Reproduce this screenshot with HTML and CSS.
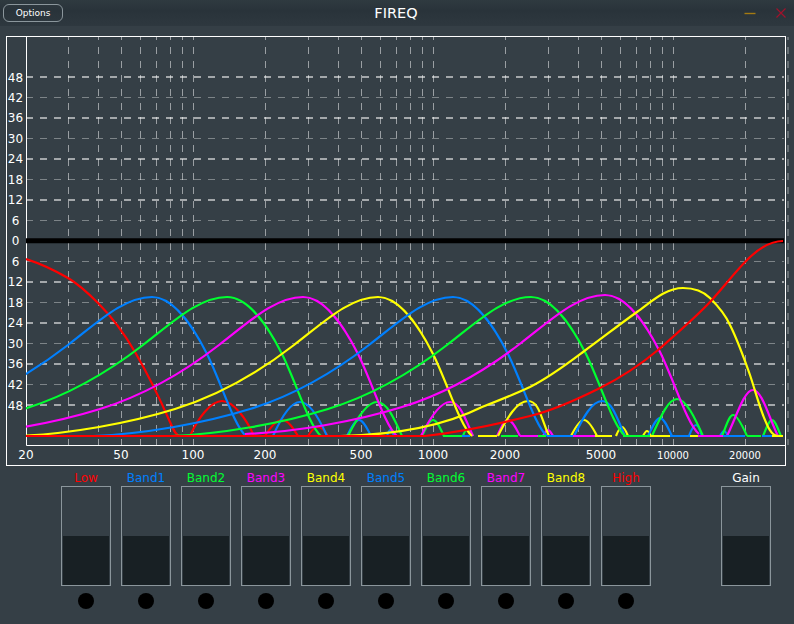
FILE: index.html
```html
<!DOCTYPE html>
<html lang="en">
  <head>
    <meta charset="UTF-8" />
    <title>FIREQ</title>
    <link rel="stylesheet" href="styles.css">
  </head>
  <body>
    <div class="titlebar">
      <button class="options-btn">Options</button>
      <div class="app-title">FIREQ</div>
      <div class="win-btns">
        <svg class="win-icon" width="12" height="12" viewBox="0 0 12 12"><path d="M0.5 6.5H11.5" stroke="#a47a12" stroke-width="1.4" /></svg>
        <svg class="win-icon" width="12" height="12" viewBox="0 0 12 12"><path d="M1.5 1.5L10.5 10.5M10.5 1.5L1.5 10.5" stroke="#a0122c" stroke-width="1.2" /></svg>
      </div>
    </div>

    <div class="graph">
      <svg class="graph-svg" width="778" height="428" viewBox="7 37 778 428">
        <defs>
          <clipPath id="plot"><rect x="26" y="37" width="758" height="408" /></clipPath>
          <g id="decade">
            <path d="M68.5 37V445M98.5 37V445M121.5 37V445M140.5 37V445M156.5 37V445M170.5 37V445M182.5 37V445M193.5 37V445M265.5 37V445" />
          </g>
          <!-- band shape, peak sits at x=0 -->
          <path id="hump" d="M-360 436 C-310 434 -250 423.6 -203 409 C-163 396.6 -124 376 -84 345 C-54 322 -28 297 0 297 C21 297 41 326 55 354 C69 382 82 426 94 436" />
        </defs>

        <!-- grid -->
        <g class="grid-v">
          <use href="#decade" />
          <use href="#decade" x="240" />
          <use href="#decade" x="480" />
          <path d="M788 37V445" />
        </g>
        <path class="grid-thin" d="M26 97.5H784M26 138.5H784M26 179.5H784M26 220.5H784M26 261.5H784M26 302.5H784M26 343.5H784M26 384.5H784" />
        <path class="grid-thick" d="M26 77H784M26 118H784M26 159H784M26 200H784M26 282H784M26 323H784M26 364H784M26 405H784" />

        <!-- axes -->
        <path class="axis" d="M26.5 37V445.5H785" />
        <path class="zero-line" d="M26 240.8H784" />

        <g class="y-labels">
          <text x="15.5" y="82">48</text>
          <text x="15.5" y="102">42</text>
          <text x="15.5" y="122">36</text>
          <text x="15.5" y="143">30</text>
          <text x="15.5" y="163">24</text>
          <text x="15.5" y="184">18</text>
          <text x="15.5" y="204">12</text>
          <text x="15.5" y="225">6</text>
          <text x="15.5" y="245">0</text>
          <text x="15.5" y="266">6</text>
          <text x="15.5" y="286">12</text>
          <text x="15.5" y="307">18</text>
          <text x="15.5" y="327">24</text>
          <text x="15.5" y="348">30</text>
          <text x="15.5" y="368">36</text>
          <text x="15.5" y="389">42</text>
          <text x="15.5" y="410">48</text>
        </g>
        <g class="x-labels">
          <text x="26" y="459">20</text>
          <text x="121" y="459">50</text>
          <text x="193" y="459">100</text>
          <text x="265" y="459">200</text>
          <text x="361" y="459">500</text>
          <text x="433" y="459">1000</text>
          <text x="505" y="459">2000</text>
          <text x="601" y="459">5000</text>
          <text x="673" y="459" class="small">10000</text>
          <text x="745" y="459" class="small">20000</text>
        </g>

        <!-- filter curves, drawn low to high -->
        <g class="curves" clip-path="url(#plot)">
          <path class="red" d="M26 259 C42 264 56 271 68 278 C80 285 90 295 98 303 C110 315 124 333 135 352 C146 371 160 399 170 422 C173 429 176 436 180 436 M190 436 C198 418 211 401 222 401 S246 418 254 436 M265 436 C270 428 276 420 282 420 S293 428 298 436 M308 436 C311 431 315 427 318 427 S325 431 328 436" />

          <use class="blue" href="#hump" x="152" />
          <path class="blue" d="M273 436 C281 418 290 402 300 402 S319 418 327 436 M347 436 C351 428 355 420 359 420 S367 428 371 436 M387 436 C388 433 389 430 390 430 S393 433 394 436" />

          <use class="green" href="#hump" x="227" />
          <path class="green" d="M348 436 C357 418 367 402 377 402 S394 418 402 436 M422 436 C426 428 429 420 433 420 S440 428 444 436 M463 436 C464 433 465 430 467 430 S471 433 473 436" />

          <use class="magenta" href="#hump" x="303" />
          <path class="magenta" d="M421 436 C430 418 440 402 450 402 S465 418 473 436 M497 436 C501 428 504 420 508 420 S516 428 520 436 M543 436 C545 433 546 430 548 430 S551 433 553 436" />

          <use class="yellow" href="#hump" x="378" />
          <path class="yellow" d="M498 436 C507 418 517 401 528 401 S541 418 549 436 M571 436 C575 428 580 420 584 420 S593 428 597 436 M616 436 C618 431 620 427 622 427 S626 431 628 436 M643 436 C644 434 646 431 647 431 S650 434 651 436" />

          <use class="blue" href="#hump" x="453" />
          <path class="blue" d="M574 436 C583 418 592 401 602 401 S617 418 625 436 M648 436 C652 428 656 418 660 418 S668 428 672 436 M689 436 C691 431 693 425 696 425 S700 431 702 436 M720 436 C721 434 723 431 724 431 S727 434 728 436" />

          <use class="green" href="#hump" x="531" />
          <path class="green" d="M652 436 C660 418 668 399 677 399 S695 418 703 436 M722 436 C726 427 729 415 733 415 S743 427 747 436 M763 436 C766 429 769 420 772 420 S778 429 781 436" />

          <use class="magenta" href="#hump" x="605" y="-2" />
          <path class="magenta" d="M727 436 C736 418 744 390 753 390 S769 418 778 436" />

          <path class="yellow" d="M340 436 C390 435 440 428 482 407 C500 400 515 394 530 387 C550 377 567 364 583 352 C601 339 620 324 637 312 C650 303 665 288 683 288 C695 288 703 291 710 298 C720 308 726 316 730 325 C738 341 744 358 750 375 C755 390 758 402 763 415 C767 425 771 436 778 436" />

          <!-- flat floor where each band reads as zero -->
          <path class="green" d="M443 436H463M480 436H484M501 436H518M538 436H546M623 436H650M747 436H761" />
          <path class="blue" d="M462 436H470M547 436H573M670 436H690M723 436H745M762 436H772" />
          <path class="magenta" d="M520 436H538M573 436H596M698 436H723" />
          <path class="yellow" d="M478 436H497M595 436H612M650 436H670M690 436H698M772 436H783" />

          <path class="red" d="M26 436 H425 C460 432 495 424.7 530 416 C555 410 578 399 600 388 C618 379 640 365 658 350 C675 335 695 318 710 302 C722 289 735 272 747 260 C757 250 770 241 783 241" />
        </g>
      </svg>
    </div>

    <div class="strip">
      <div class="slot">
        <div class="slot-name red-txt">Low</div>
        <div class="fader"><div class="fader-fill"></div></div>
        <div class="knob"></div>
      </div>
      <div class="slot">
        <div class="slot-name blue-txt">Band1</div>
        <div class="fader"><div class="fader-fill"></div></div>
        <div class="knob"></div>
      </div>
      <div class="slot">
        <div class="slot-name green-txt">Band2</div>
        <div class="fader"><div class="fader-fill"></div></div>
        <div class="knob"></div>
      </div>
      <div class="slot">
        <div class="slot-name magenta-txt">Band3</div>
        <div class="fader"><div class="fader-fill"></div></div>
        <div class="knob"></div>
      </div>
      <div class="slot">
        <div class="slot-name yellow-txt">Band4</div>
        <div class="fader"><div class="fader-fill"></div></div>
        <div class="knob"></div>
      </div>
      <div class="slot">
        <div class="slot-name blue-txt">Band5</div>
        <div class="fader"><div class="fader-fill"></div></div>
        <div class="knob"></div>
      </div>
      <div class="slot">
        <div class="slot-name green-txt">Band6</div>
        <div class="fader"><div class="fader-fill"></div></div>
        <div class="knob"></div>
      </div>
      <div class="slot">
        <div class="slot-name magenta-txt">Band7</div>
        <div class="fader"><div class="fader-fill"></div></div>
        <div class="knob"></div>
      </div>
      <div class="slot">
        <div class="slot-name yellow-txt">Band8</div>
        <div class="fader"><div class="fader-fill"></div></div>
        <div class="knob"></div>
      </div>
      <div class="slot">
        <div class="slot-name red-txt">High</div>
        <div class="fader"><div class="fader-fill"></div></div>
        <div class="knob"></div>
      </div>
      <div class="slot gain-slot">
        <div class="slot-name">Gain</div>
        <div class="fader"><div class="fader-fill"></div></div>
      </div>
    </div>
  </body>
</html>
```

FILE: styles.css
```css
html,
body {
  margin: 0;
  height: 100%;
  overflow: hidden;
}
body {
  font-family: "DejaVu Sans", sans-serif;
  background-color: #353f46;
  color: #fff;
}
.titlebar {
  height: 26px;
  display: flex;
  align-items: center;
  justify-content: space-between;
  padding: 0 7px 0 3px;
  background: linear-gradient(#2f3a40, #29333a 40%, #2e383f);
  position: relative;
}
.options-btn {
  width: 60px;
  height: 18px;
  padding: 0;
  font-family: inherit;
  font-size: 9px;
  color: #fff;
  background: transparent;
  border: 1px solid #8b969c;
  border-radius: 6px;
}
.app-title {
  font-size: 14.5px;
  position: absolute;
  left: -2px;
  right: 0;
  text-align: center;
  pointer-events: none;
}
.win-btns {
  display: flex;
  gap: 19px;
  margin-bottom: 1px;
}
.win-icon {
  display: block;
}
.graph {
  width: 780px;
  height: 430px;
  box-sizing: border-box;
  margin: 10px 0 0 6px;
  border: 1px solid #fff;
}
.graph-svg {
  display: block;
  overflow: visible;
}
.grid-v {
  fill: none;
  stroke: #fff;
  stroke-opacity: 0.5;
  stroke-width: 1;
  stroke-dasharray: 7 7;
  stroke-dashoffset: 4;
}
.grid-thin,
.grid-thick {
  fill: none;
  stroke: #fff;
  stroke-dasharray: 7 7;
}
.grid-thin {
  stroke-opacity: 0.36;
  stroke-width: 1;
}
.grid-thick {
  stroke-opacity: 0.55;
  stroke-width: 2;
}
.axis {
  fill: none;
  stroke: #fff;
  stroke-width: 1;
}
.zero-line {
  stroke: #000;
  stroke-width: 5;
}
.y-labels text,
.x-labels text {
  fill: #fff;
  font-size: 12px;
  text-anchor: middle;
}
.x-labels .small {
  font-size: 10px;
}
.curves path,
.curves use {
  fill: none;
  stroke-width: 2.2;
  stroke-linejoin: round;
}
.red { stroke: #ff0000; }
.blue { stroke: #0080ff; }
.green { stroke: #00ff30; }
.magenta { stroke: #ff00ff; }
.yellow { stroke: #ffff00; }
.strip {
  display: flex;
  gap: 10px;
  margin: 4px 0 0 61px;
}
.slot {
  width: 50px;
  display: flex;
  flex-direction: column;
  align-items: center;
}
.gain-slot {
  margin-left: 60px;
}
.slot-name {
  height: 16px;
  line-height: 16px;
  font-size: 12px;
}
.red-txt { color: #f00; }
.blue-txt { color: #0080ff; }
.green-txt { color: #00ff30; }
.magenta-txt { color: #f0f; }
.yellow-txt { color: #ff0; }
.fader {
  width: 50px;
  height: 100px;
  box-sizing: border-box;
  border: 1px solid #8b969c;
  display: flex;
  flex-direction: column;
  justify-content: flex-end;
  padding: 0 1px;
}
.fader-fill {
  height: 49px;
  background-color: #182024;
}
.knob {
  width: 16px;
  height: 16px;
  margin-top: 7px;
  border-radius: 50%;
  background-color: #000;
}
```
